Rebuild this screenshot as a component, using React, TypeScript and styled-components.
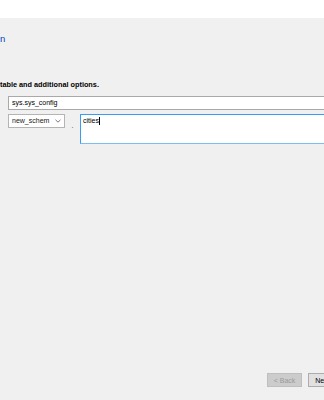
import React from "react";
import styled, { createGlobalStyle } from "styled-components";

const GlobalStyle = createGlobalStyle`
	html, body {
		margin: 0;
		padding: 0;
		background-color: #f0f0f0;
		overflow: hidden;
	}
	body {
		font-family: "Liberation Sans", "Noto Sans", sans-serif;
		font-size: 7px;
		color: #000;
	}
`;

const StyledDialog = styled.div`
	width: 324px;
	height: 400px;
	display: flex;
	flex-direction: column;
	overflow: hidden;
`;

const StyledHeader = styled.div`
	height: 18px;
	background-color: #fff;
	flex-shrink: 0;
`;

const StyledBody = styled.div`
	padding: 15px 0 0 0;
	display: flex;
	flex-direction: column;
`;

const StyledLink = styled.div`
	color: #0046c0;
	font-size: 9.5px;
	line-height: 11px;
	height: 11px;
	white-space: nowrap;
`;

const StyledInstruction = styled.div`
	margin-top: 36px;
	font-weight: bold;
	font-size: 7.3px;
	line-height: 9px;
	white-space: nowrap;
`;

const StyledFields = styled.div`
	margin: 7px -40px 0 8px;
	display: flex;
	flex-direction: column;
	gap: 4px;
`;

const StyledTextInput = styled.div`
	height: 14px;
	box-sizing: border-box;
	border: 1px solid #a9a9a9;
	background-color: #fff;
	padding: 0 3px;
	line-height: 12px;
	white-space: nowrap;
`;

const StyledRow = styled.div`
	display: flex;
	align-items: flex-start;
`;

const StyledSelect = styled.div`
	width: 57px;
	height: 14px;
	box-sizing: border-box;
	border: 1px solid #b4b4b4;
	background-color: #fff;
	padding: 0 3px;
	line-height: 12px;
	display: flex;
	align-items: center;
	justify-content: space-between;
	white-space: nowrap;
	color: #222;
`;

const StyledDot = styled.span`
	width: 15px;
	text-align: center;
	padding-top: 8px;
	line-height: 7px;
	color: #333;
`;

const StyledTextArea = styled.div`
	flex: 1;
	height: 30px;
	box-sizing: border-box;
	border: 1px solid #3a9cf0;
	border-bottom-color: #7cbdf2;
	background-color: #fff;
	padding: 2px 2px;
	line-height: 8px;
`;

const StyledCaret = styled.span`
	display: inline-block;
	width: 1px;
	height: 8px;
	background-color: #000;
	vertical-align: top;
`;

const StyledFooter = styled.div`
	margin-top: auto;
	margin-right: -19px;
	padding-bottom: 13px;
	display: flex;
	justify-content: flex-end;
	gap: 6px;
`;

const StyledButton = styled.button<{ $disabled?: boolean }>`
	width: 35px;
	height: 14px;
	box-sizing: border-box;
	padding: 0;
	font-family: inherit;
	font-size: 7px;
	border: 1px solid ${(p) => (p.$disabled ? "#bfbfbf" : "#adadad")};
	background-color: ${(p) => (p.$disabled ? "#cccccc" : "#e1e1e1")};
	color: ${(p) => (p.$disabled ? "#9a9a9a" : "#000")};
`;

const Chevron = () => (
	<svg width="6" height="4" viewBox="0 0 6 4">
		<path d="M0.5 0.8 L3 3.2 L5.5 0.8" fill="none" stroke="#555" strokeWidth="0.8" />
	</svg>
);

const App = () => {
	return (
		<>
			<GlobalStyle />
			<StyledDialog>
				<StyledHeader />
				<StyledBody>
					<StyledLink>n</StyledLink>
					<StyledInstruction>table and additional options.</StyledInstruction>
					<StyledFields>
						<StyledTextInput>sys.sys_config</StyledTextInput>
						<StyledRow>
							<StyledSelect>
								<span>new_schem</span>
								<Chevron />
							</StyledSelect>
							<StyledDot>.</StyledDot>
							<StyledTextArea>
								cities
								<StyledCaret />
							</StyledTextArea>
						</StyledRow>
					</StyledFields>
				</StyledBody>
				<StyledFooter>
					<StyledButton $disabled>&lt; Back</StyledButton>
					<StyledButton>Next &gt;</StyledButton>
				</StyledFooter>
			</StyledDialog>
		</>
	);
};

export default App;
